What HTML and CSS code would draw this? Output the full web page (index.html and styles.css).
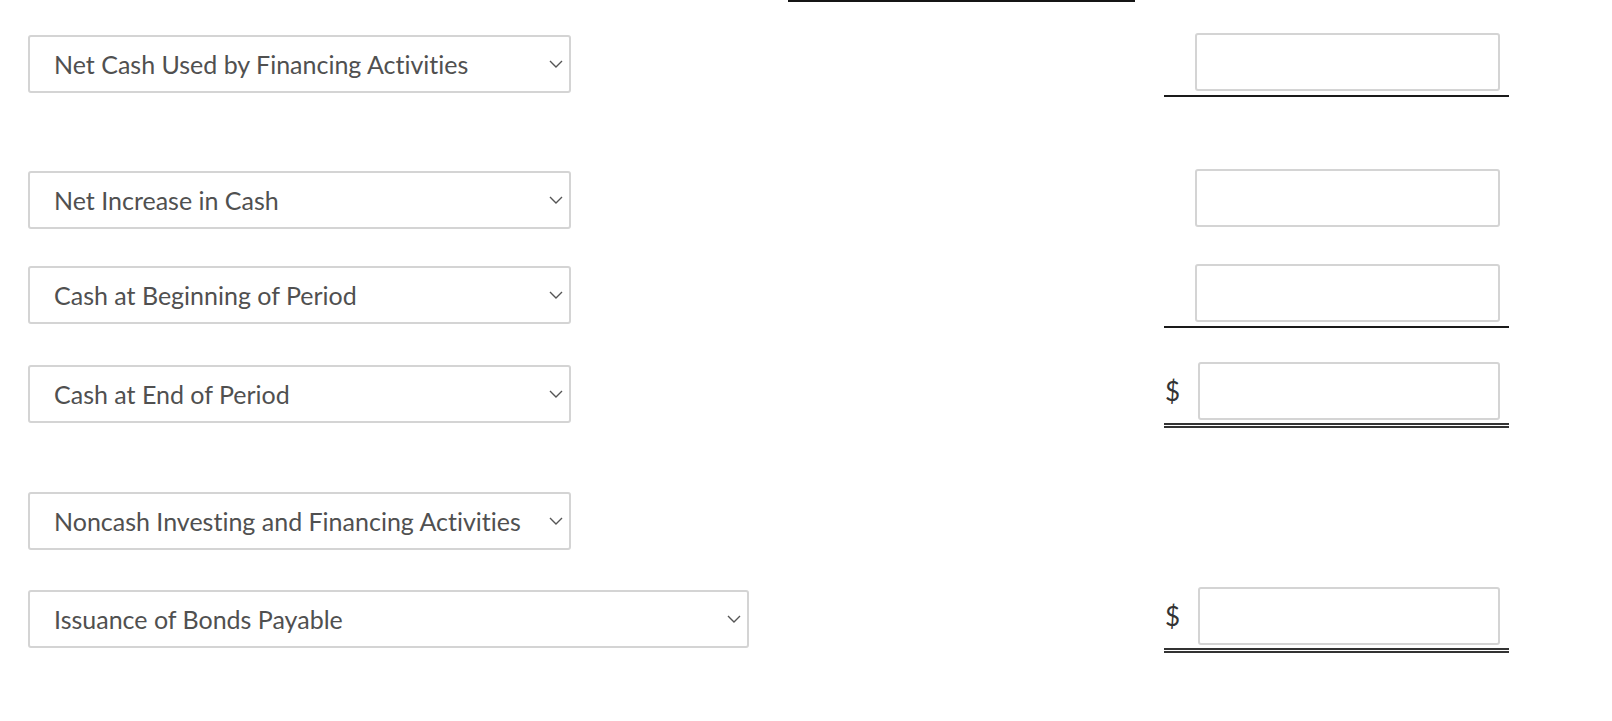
FILE: index.html
```html
<!DOCTYPE html>
<html>
<head>
<meta charset="utf-8">
<link rel="stylesheet" href="styles.css">
</head>
<body>
<div class="sheet">
  <div class="row row-top">
    <div class="c1"></div>
    <div class="c2 rule-top"></div>
    <div class="c3"></div>
  </div>

  <div class="row">
    <div class="c1">
      <div class="select">
        <select><option>Net Cash Used by Financing Activities</option></select>
        <svg class="chev" viewBox="0 0 14 8"><polyline points="1,1 7,7 13,1"/></svg>
      </div>
    </div>
    <div class="c2"></div>
    <div class="c3 amount single"><input type="text"></div>
  </div>

  <div class="spacer-a"></div>

  <div class="row row-tight">
    <div class="c1">
      <div class="select">
        <select><option>Net Increase in Cash</option></select>
        <svg class="chev" viewBox="0 0 14 8"><polyline points="1,1 7,7 13,1"/></svg>
      </div>
    </div>
    <div class="c2"></div>
    <div class="c3 amount"><input type="text"></div>
  </div>

  <div class="row row-loose">
    <div class="c1">
      <div class="select">
        <select><option>Cash at Beginning of Period</option></select>
        <svg class="chev" viewBox="0 0 14 8"><polyline points="1,1 7,7 13,1"/></svg>
      </div>
    </div>
    <div class="c2"></div>
    <div class="c3 amount single"><input type="text"></div>
  </div>

  <div class="row">
    <div class="c1">
      <div class="select">
        <select><option>Cash at End of Period</option></select>
        <svg class="chev" viewBox="0 0 14 8"><polyline points="1,1 7,7 13,1"/></svg>
      </div>
    </div>
    <div class="c2"></div>
    <div class="c3 amount double dollar"><span class="dollar-sign">$</span><input type="text"></div>
  </div>

  <div class="spacer-b"></div>

  <div class="row">
    <div class="c1">
      <div class="select">
        <select><option>Noncash Investing and Financing Activities</option></select>
        <svg class="chev" viewBox="0 0 14 8"><polyline points="1,1 7,7 13,1"/></svg>
      </div>
    </div>
    <div class="c2"></div>
    <div class="c3"></div>
  </div>

  <div class="row">
    <div class="c1">
      <div class="select select-wide">
        <select><option>Issuance of Bonds Payable</option></select>
        <svg class="chev" viewBox="0 0 14 8"><polyline points="1,1 7,7 13,1"/></svg>
      </div>
    </div>
    <div class="c2"></div>
    <div class="c3 amount double dollar"><span class="dollar-sign">$</span><input type="text"></div>
  </div>
</div>
</body>
</html>
```

FILE: styles.css
```css
* { box-sizing: border-box; }

body {
  margin: 0;
  background: #fff;
  font-family: Lato, "Open Sans", sans-serif;
  color: #505050;
}

.sheet {
  padding-left: 28px;
}

.row {
  display: grid;
  grid-template-columns: 731px 347px 345px;
  grid-template-rows: 58px;
  column-gap: 29px;
  align-items: start;
  padding: 20px 0;
}

.row-tight { padding-bottom: 17px; }
.row-loose { padding-bottom: 21px; }

.row-top {
  padding: 0;
  grid-template-rows: 15px;
}

.rule-top {
  height: 15px;
  border-top: 2px solid #151515;
}

.spacer-a { height: 38px; }
.spacer-b { height: 29px; }

.select {
  position: relative;
  width: 543px;
  height: 58px;
}

.select-wide { width: 721px; }

.select select {
  -webkit-appearance: none;
  appearance: none;
  width: 100%;
  height: 100%;
  margin: 0;
  padding: 0 30px 0 24px;
  border: 2px solid #d4d4d4;
  border-radius: 3px;
  background: #fff;
  font-family: Lato, "Open Sans", sans-serif;
  font-size: 25px;
  font-variant-ligatures: none;
  color: #505050;
  outline: none;
}

.chev {
  position: absolute;
  right: 8px;
  top: 50%;
  width: 14px;
  height: 8px;
  margin-top: -4px;
  pointer-events: none;
}

.chev polyline {
  fill: none;
  stroke: #555;
  stroke-width: 1.4;
}

.amount {
  display: flex;
  align-items: center;
  margin-top: -2px;
  padding: 0 9px 4px 31px;
}

.amount.single { border-bottom: 2px solid #1a1a1a; }
.amount.double { border-bottom: 5px double #333; margin-top: -3px; padding-bottom: 3px; }
.amount.dollar { padding-left: 0; }

.dollar-sign {
  width: 34px;
  flex: none;
  font-size: 26px;
  color: #333;
  padding-left: 1px;
}

.amount input {
  flex: 1;
  min-width: 0;
  height: 58px;
  margin: 0;
  padding: 0 10px;
  border: 2px solid #d4d4d4;
  border-radius: 3px;
  background: #fff;
  font-family: Lato, "Open Sans", sans-serif;
  font-size: 22px;
  outline: none;
}
```
